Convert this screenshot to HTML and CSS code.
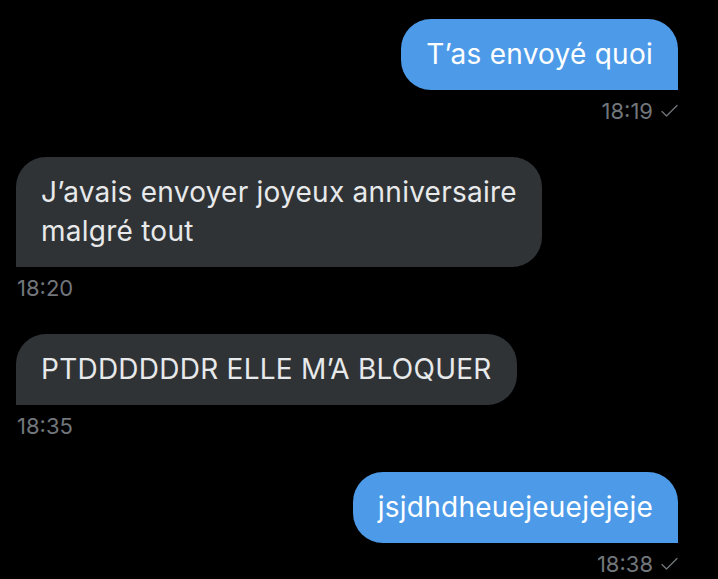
FILE: index.html
```html
<!DOCTYPE html>
<html lang="fr">
<head>
<meta charset="utf-8">
<title>Messages</title>
<link rel="stylesheet" href="styles.css">
</head>
<body>
<div class="thread">
  <div class="msg sent">
    <div class="bubble">T’as envoyé quoi</div>
    <div class="meta">18:19 <svg class="check" width="17" height="14" viewBox="0 0 17 14"><path d="M1 7.5 L5.5 12 L16 1.5" fill="none" stroke="currentColor" stroke-width="1.3" stroke-linecap="round" stroke-linejoin="round"/></svg></div>
  </div>
  <div class="msg received">
    <div class="bubble">J’avais envoyer joyeux anniversaire<br>malgré tout</div>
    <div class="meta">18:20</div>
  </div>
  <div class="msg received">
    <div class="bubble">PTDDDDDDR ELLE M’A BLOQUER</div>
    <div class="meta">18:35</div>
  </div>
  <div class="msg sent">
    <div class="bubble">jsjdhdheuejeuejejeje</div>
    <div class="meta">18:38 <svg class="check" width="17" height="14" viewBox="0 0 17 14"><path d="M1 7.5 L5.5 12 L16 1.5" fill="none" stroke="currentColor" stroke-width="1.3" stroke-linecap="round" stroke-linejoin="round"/></svg></div>
  </div>
</div>
</body>
</html>
```
FILE: styles.css
```css
html, body {
  margin: 0;
  background: #000;
}
body {
  font-family: Inter, "Liberation Sans", sans-serif;
  width: 718px;
  height: 579px;
  overflow: hidden;
}
.thread {
  display: flex;
  flex-direction: column;
  gap: 33px;
  padding: 19px 40px 0 16px;
}
.msg {
  display: flex;
  flex-direction: column;
}
.msg.sent {
  align-items: flex-end;
}
.msg.received {
  align-items: flex-start;
}
.bubble {
  box-sizing: border-box;
  max-width: 560px;
  padding: 16px 25px;
  font-size: 28px;
  line-height: 39px;
  letter-spacing: 0.25px;
  border-radius: 30px;
  white-space: nowrap;
}
.sent .bubble {
  background: #4c9ae8;
  color: #fff;
  border-bottom-right-radius: 0;
}
.received .bubble {
  background: #2f3336;
  color: #e7e9ea;
  border-bottom-left-radius: 0;
}
.meta {
  margin-top: 8px;
  font-size: 22px;
  line-height: 26px;
  color: #71767b;
  display: flex;
  align-items: center;
  gap: 8px;
}
.received .meta {
  padding-left: 1px;
}
.check {
  display: block;
}
```
